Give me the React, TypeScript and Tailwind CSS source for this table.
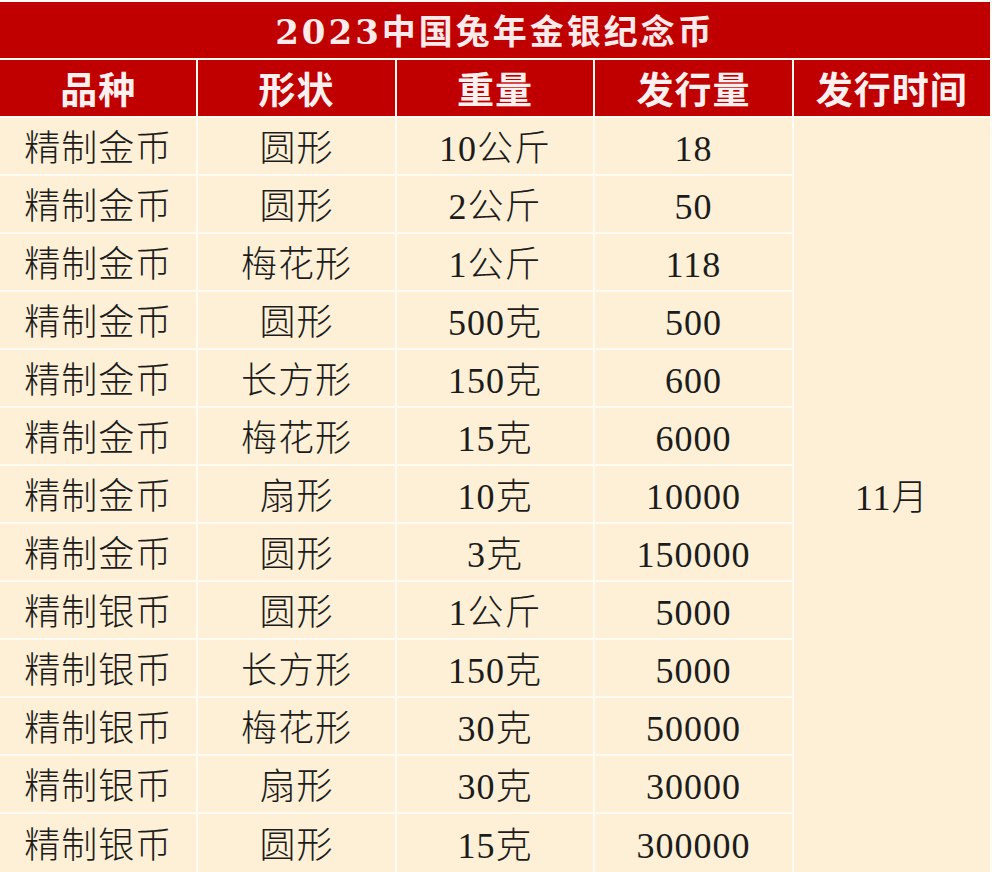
const rows: [string, string, string, string][] = [
  ["精制金币", "圆形", "10公斤", "18"],
  ["精制金币", "圆形", "2公斤", "50"],
  ["精制金币", "梅花形", "1公斤", "118"],
  ["精制金币", "圆形", "500克", "500"],
  ["精制金币", "长方形", "150克", "600"],
  ["精制金币", "梅花形", "15克", "6000"],
  ["精制金币", "扇形", "10克", "10000"],
  ["精制金币", "圆形", "3克", "150000"],
  ["精制银币", "圆形", "1公斤", "5000"],
  ["精制银币", "长方形", "150克", "5000"],
  ["精制银币", "梅花形", "30克", "50000"],
  ["精制银币", "扇形", "30克", "30000"],
  ["精制银币", "圆形", "15克", "300000"],
];

const headers = ["品种", "形状", "重量", "发行量", "发行时间"];

const serif = "font-['Liberation_Serif','Noto_Sans_CJK_SC',serif]";
const cell = `bg-[#fdf0d6] flex items-center justify-center pt-[5px] text-[#1c1c1c] text-[36px] font-light tracking-[1px] ${serif}`;

export default function App() {
  return (
    <div className="w-[992px] h-[872px] overflow-hidden bg-[#fffaf2] pt-[2px] pr-[2px]">
      <div className="grid grid-cols-5 gap-[2px] grid-rows-[56px_56px_repeat(12,56px)_58px]">
        {/* title */}
        <div
          className={`col-span-5 bg-[#c00000] flex items-center justify-center pt-[4px] text-[#fdeaea] text-[34px] font-bold tracking-[3px] ${serif}`}
        >
          <span className="font-['DejaVu_Serif','Noto_Sans_CJK_SC',serif]">2023</span>
          中国兔年金银纪念币
        </div>

        {headers.map((h) => (
          <div
            key={h}
            className={`bg-[#c00000] flex items-center justify-center pt-[8px] text-[#fff0f0] text-[37px] font-bold tracking-[1px] ${serif}`}
          >
            {h}
          </div>
        ))}

        {rows.map((r, i) =>
          r.map((c, j) => (
            <div key={`${i}-${j}`} className={cell} style={{ gridRow: i + 3, gridColumn: j + 1 }}>
              {c}
            </div>
          ))
        )}

        {/* release time spans all data rows */}
        <div className={`${cell} col-start-5 row-start-3 row-span-13`}>11月</div>
      </div>
    </div>
  );
}
